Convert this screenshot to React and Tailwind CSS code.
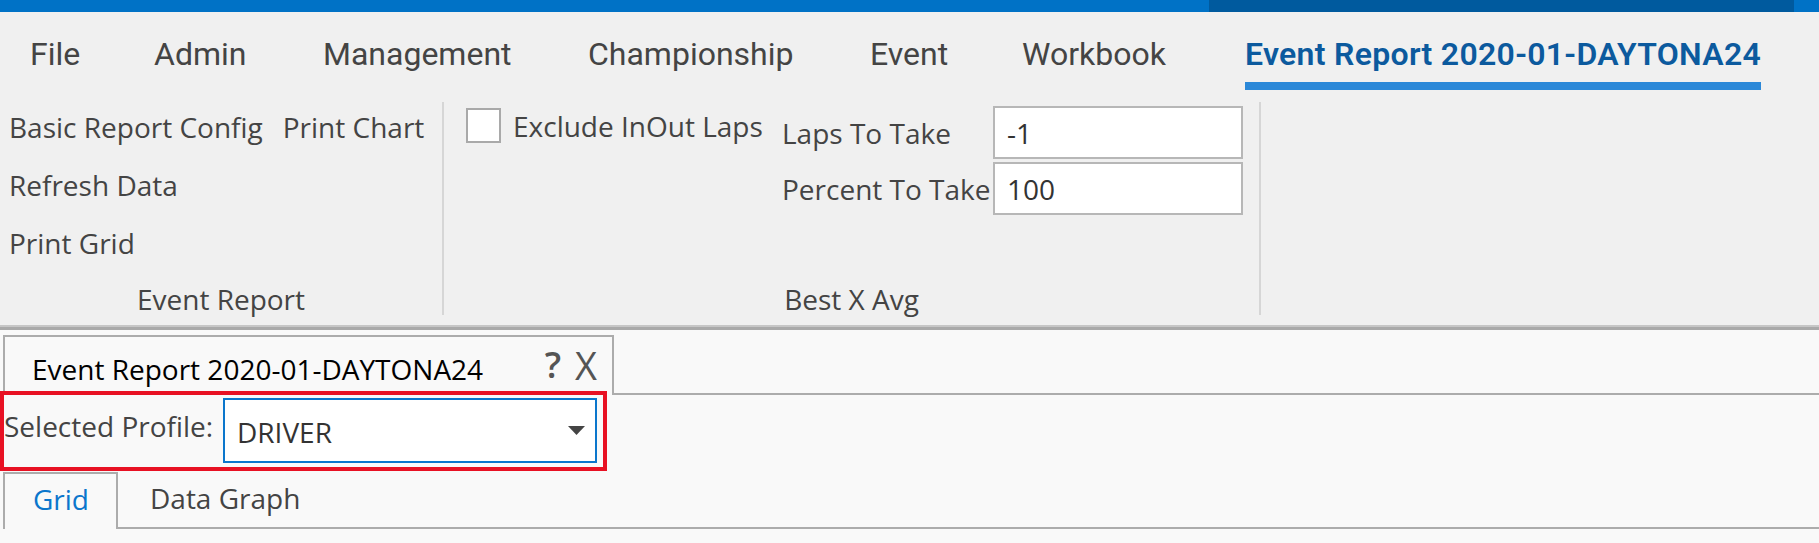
import React from 'react';

const menuItems = [
  { label: 'File', cls: 'w-[124px]' },
  { label: 'Admin', cls: 'w-[169px]' },
  { label: 'Management', cls: 'w-[265px]' },
  { label: 'Championship', cls: 'w-[282px]' },
  { label: 'Event', cls: 'w-[152px]' },
  { label: 'Workbook', cls: 'w-[223px]' },
];

function Separator() {
  return <div className="mt-[12px] mb-[10px] w-[2px] bg-[#d6d6d6]" />;
}

export default function App() {
  return (
    <div className="h-[543px] w-[1819px] overflow-hidden bg-[#f9f9f9] font-['Open_Sans',sans-serif] text-[28px] leading-[38px] text-[#444]">
      {/* Title bar strip */}
      <div className="flex h-[12px]">
        <div className="w-[1209px] bg-[#0072c6]" />
        <div className="w-[585px] bg-[#005a9e]" />
        <div className="flex-1 bg-[#0072c6]" />
      </div>

      {/* Menu tabs */}
      <div className="flex h-[78px] bg-[#f0f0f0] pl-[30px] pt-[23px] font-['Roboto',sans-serif] text-[32px] leading-[38px] text-[#444]">
        {menuItems.map((m) => (
          <div key={m.label} className={m.cls}>
            {m.label}
          </div>
        ))}
        <div className="flex flex-col">
          <span className="font-semibold tracking-[0.3px] text-[#0c5a9e]">Event Report 2020-01-DAYTONA24</span>
          <div className="mt-[9px] h-[8px] bg-[#2b88d8]" />
        </div>
      </div>

      {/* Ribbon */}
      <div className="flex h-[235px] bg-[#f0f0f0]">
        {/* Event Report group */}
        <div className="flex w-[442px] flex-col pt-[8px]">
          <div className="flex h-[58px] items-center gap-[20px] pl-[9px]">
            <span>Basic Report Config</span>
            <span>Print Chart</span>
          </div>
          <div className="flex h-[58px] items-center pl-[9px]">Refresh Data</div>
          <div className="flex h-[58px] items-center pl-[9px]">Print Grid</div>
          <div className="flex flex-1 items-center justify-center">Event Report</div>
        </div>
        <Separator />

        {/* Best X Avg group */}
        <div className="flex w-[815px] flex-col pt-[8px]">
          <div className="flex h-[174px] pl-[22px] pr-[16px]">
            <div className="mt-[10px] flex h-[35px] items-center gap-[12px]">
              <div className="h-[35px] w-[35px] border-2 border-[#a9a9a9] bg-white" />
              <span>Exclude InOut Laps</span>
            </div>
            <div className="ml-auto mt-[8px] grid grid-cols-[211px_250px] gap-y-[3px] self-start">
              <div className="flex h-[53px] items-center">Laps To Take</div>
              <div className="flex h-[53px] items-center border-2 border-[#b7b7b7] bg-white pl-[12px] text-[#333]">-1</div>
              <div className="flex h-[53px] items-center whitespace-nowrap">Percent To Take</div>
              <div className="flex h-[53px] items-center border-2 border-[#b7b7b7] bg-white pl-[12px] text-[#333]">100</div>
            </div>
          </div>
          <div className="flex flex-1 items-center justify-center">Best X Avg</div>
        </div>
        <Separator />
      </div>
      <div className="h-[2px] bg-[#c6c6c6]" />
      <div className="h-[3px] bg-[#a9a9a9]" />

      {/* Document tab strip */}
      <div className="flex h-[65px] items-end pt-[5px]">
        <div className="ml-[3px] flex h-[60px] w-[611px] items-start border-2 border-b-0 border-[#acacac] pl-[27px] pr-[15px] pt-[13px]">
          <span className="text-black">Event Report 2020-01-DAYTONA24</span>
          <div className="ml-auto flex gap-[14px] text-[36px] leading-[30px] text-[#555]">
            <span className="font-semibold">?</span>
            <span className="text-[38px]">X</span>
          </div>
        </div>
        <div className="h-[2px] flex-1 bg-[#acacac]" />
      </div>

      {/* Profile selector (highlighted) */}
      <div className="relative z-10 -mt-[4px] flex h-[80px] w-[607px] items-start border-4 border-[#e81123]">
        <div className="mt-[12px] w-[219px] whitespace-nowrap">Selected Profile:</div>
        <div className="mt-[3px] flex h-[65px] w-[374px] items-center border-2 border-[#0b76cc] bg-white pl-[12px] pr-[10px] text-[#333]">
          <span className="mt-[2px]">DRIVER</span>
          <svg className="ml-auto" width="17" height="9" viewBox="0 0 17 9">
            <path d="M0 0h17L8.5 9z" fill="#444" />
          </svg>
        </div>
      </div>

      {/* Inner tabs */}
      <div className="mt-[1px] flex h-[57px]">
        <div className="ml-[3px] h-[57px] w-[115px] border-2 border-b-0 border-[#acacac] pl-[28px] pt-[6px] text-[#0b76cc]">
          Grid
        </div>
        <div className="h-[57px] flex-1 border-b-2 border-[#acacac] pl-[32px] pt-[7px]">Data Graph</div>
      </div>
    </div>
  );
}
